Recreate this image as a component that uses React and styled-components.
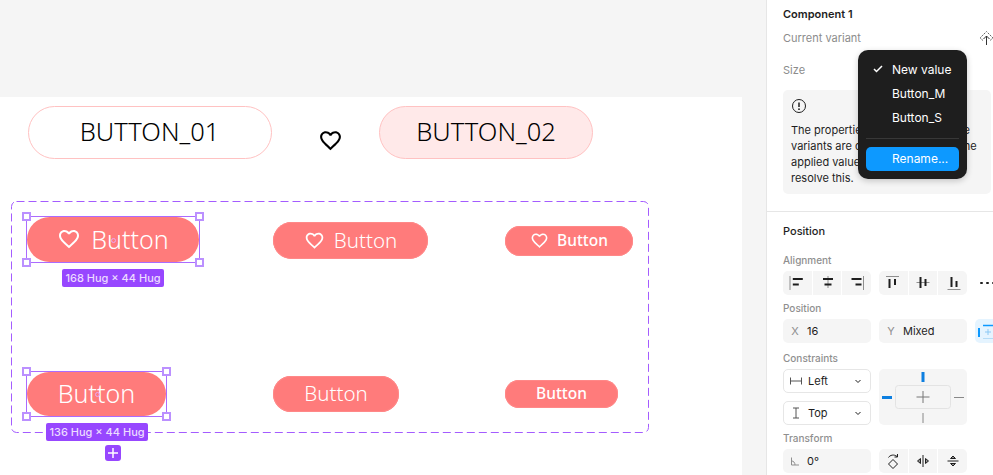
import styled, { createGlobalStyle } from 'styled-components';

const GlobalStyle = createGlobalStyle`
  html, body {
    margin: 0;
    padding: 0;
    background: #f5f5f5;
  }
  #root {
    height: 475px;
    overflow: hidden;
  }
`;

const Page = styled.div`
  display: flex;
  width: 993px;
  height: 475px;
  overflow: hidden;
  font-family: Inter, "Liberation Sans", sans-serif;
`;

/* canvas side: things here sit at their own place on the figma canvas */
const Canvas = styled.div`
  position: relative;
  width: 766px;
  height: 475px;
  flex: none;
  background: #f5f5f5;
`;

const Frame = styled.div`
  position: absolute;
  left: 0;
  top: 97px;
  width: 742px;
  height: 378px;
  background: #fff;
`;

const Pill = styled.div`
  position: absolute;
  left: ${p => p.$x}px;
  top: 106px;
  width: ${p => p.$w}px;
  height: 53px;
  box-sizing: border-box;
  display: flex;
  align-items: center;
  justify-content: center;
  padding-bottom: 4px;
  border: 1px solid #ffc2c2;
  border-radius: 27px;
  background: ${p => (p.$tint ? '#ffe9e9' : '#fff')};
  color: #000;
  font-family: "Noto Sans", sans-serif;
  font-weight: 300;
  font-size: 25.5px;
`;

const Btn = styled.div`
  position: absolute;
  left: ${p => p.$x}px;
  top: ${p => p.$y}px;
  width: ${p => p.$w}px;
  height: ${p => p.$h}px;
  box-sizing: border-box;
  display: flex;
  align-items: center;
  justify-content: center;
  gap: ${p => p.$gap}px;
  padding-bottom: 1px;
  border-radius: ${p => p.$h / 2}px;
  background: #ff7b7b;
  box-shadow: ${p => (p.$edge ? 'inset 0 0 0 1px #ff8888' : 'none')};
  color: #fff;
  font-family: "Noto Sans", sans-serif;
  font-weight: ${p => p.$weight};
  font-size: ${p => p.$font}px;
  line-height: 1;
`;

const HeartIcon = ({ size, color = '#fff' }) => (
  <svg width={size} height={size} viewBox="0 0 24 24" fill={color} style={{ flex: 'none' }}>
    <path d="M16.5 3c-1.74 0-3.41.81-4.5 2.09C10.91 3.81 9.24 3 7.5 3 4.42 3 2 5.42 2 8.5c0 3.78 3.4 6.86 8.55 11.54L12 21.35l1.45-1.32C18.6 15.36 22 12.28 22 8.5 22 5.42 19.58 3 16.5 3zm-4.4 15.55l-.1.1-.1-.1C7.14 14.24 4 11.39 4 8.5 4 6.5 5.5 5 7.5 5c1.54 0 3.04.99 3.57 2.36h1.87C13.46 5.99 14.96 5 16.5 5c2 0 3.5 1.5 3.5 3.5 0 2.89-3.14 5.74-7.9 10.05z" />
  </svg>
);

const LooseHeart = styled.div`
  position: absolute;
  left: 318px;
  top: 128px;
  width: 25px;
  height: 25px;
`;

const DashFrame = styled.svg`
  position: absolute;
  left: 11px;
  top: 201px;
  overflow: visible;
`;

const Selection = styled.div`
  position: absolute;
  left: ${p => p.$x}px;
  top: ${p => p.$y}px;
  width: ${p => p.$w}px;
  height: ${p => p.$h}px;
  box-sizing: border-box;
  border: 1.5px solid #ab6bff;
`;

const Handle = styled.span`
  position: absolute;
  box-sizing: border-box;
  width: 9px;
  height: 9px;
  background: #fff;
  border: 2px solid #bb90ff;
  ${p => (p.$top ? 'top: -5px;' : 'bottom: -5px;')}
  ${p => (p.$left ? 'left: -5px;' : 'right: -5px;')}
`;

const CenterDot = styled.span`
  position: absolute;
  left: 50%;
  top: 50%;
  width: 3px;
  height: 3px;
  margin: -2px 0 0 -2px;
  border: 1px solid #e9a6f5;
  border-radius: 50%;
`;

const SizeTag = styled.div`
  position: absolute;
  left: ${p => p.$x}px;
  top: ${p => p.$y}px;
  width: 102px;
  height: 18px;
  display: flex;
  align-items: center;
  justify-content: center;
  border-radius: 2px;
  background: #9747ff;
  color: #ecdcff;
  font-size: 11px;
  font-weight: 500;
  white-space: nowrap;
`;

const AddBadge = styled.div`
  position: absolute;
  left: 105px;
  top: 445px;
  width: 16px;
  height: 16px;
  display: flex;
  align-items: center;
  justify-content: center;
  border-radius: 3px;
  background: #9747ff;
`;

/* right panel */
const Panel = styled.aside`
  position: relative;
  width: 227px;
  height: 475px;
  flex: none;
  box-sizing: border-box;
  background: #fff;
  border-left: 1px solid #e6e6e6;
  color: #1e1e1e;
  font-size: 11px;
`;

const Section = styled.section`
  padding: ${p => p.$pad};
  padding-left: 16px;
  border-bottom: ${p => (p.$line ? '1px solid #e6e6e6' : 'none')};
`;

const Title = styled.div`
  height: 16px;
  line-height: 16px;
  font-weight: ${p => p.$weight || 500};
  white-space: nowrap;
`;

const VariantRow = styled.div`
  display: flex;
  align-items: center;
  justify-content: space-between;
  height: 24px;
  margin-top: ${p => p.$mt}px;
  color: #8c8c8c;
`;

const Notice = styled.div`
  width: 208px;
  height: 104px;
  box-sizing: border-box;
  margin-top: 8px;
  padding: 8px;
  border-radius: 5px;
  background: #f5f5f5;
  line-height: 16px;
  white-space: nowrap;
  overflow: hidden;
`;

const NoticeIcon = styled.div`
  height: 16px;
  margin-bottom: 8px;
`;

const Label = styled.div`
  height: 16px;
  line-height: 16px;
  margin-top: ${p => p.$mt}px;
  margin-bottom: 3px;
  color: #8f8f8f;
  font-size: 10px;
  font-weight: 500;
`;

const Line = styled.div`
  display: grid;
  grid-template-columns: 88px 88px 18px;
  gap: 8px;
`;

const Seg = styled.div`
  display: grid;
  grid-template-columns: repeat(3, 1fr);
  gap: 1px;
  height: 24px;
  border-radius: 5px;
  overflow: hidden;
`;

const SegCell = styled.div`
  display: flex;
  align-items: center;
  justify-content: center;
  background: #f5f5f5;
`;

const Dots = styled.div`
  display: flex;
  align-items: center;
  gap: 3.5px;
  padding-left: 5px;
`;

const Dot = styled.span`
  flex: none;
  width: 2.5px;
  height: 2.5px;
  border-radius: 50%;
  background: #1e1e1e;
`;

const Field = styled.div`
  display: flex;
  align-items: center;
  height: 24px;
  padding-left: 4px;
  border-radius: 5px;
  background: #f5f5f5;
`;

const FieldKey = styled.span`
  display: flex;
  justify-content: center;
  width: 16px;
  color: #8f8f8f;
  flex: none;
`;

const FieldValue = styled.span`
  margin-left: 4px;
`;

const BlueToggle = styled.div`
  display: flex;
  align-items: center;
  height: 24px;
  padding-left: 2px;
  border-radius: 5px 0 0 5px;
  background: #e5f4ff;
`;

const Stack = styled.div`
  display: flex;
  flex-direction: column;
  gap: 8px;
`;

const Select = styled.div`
  display: flex;
  align-items: center;
  height: 24px;
  box-sizing: border-box;
  padding: 0 8px 0 6px;
  border: 1px solid #e6e6e6;
  border-radius: 5px;
`;

const SelectText = styled.span`
  flex: 1;
  margin-left: 6px;
`;

const ConstraintBox = styled.div`
  height: 56px;
  border-radius: 5px;
  background: #f5f5f5;
`;

const Menu = styled.div`
  position: absolute;
  left: 91px;
  top: 50px;
  width: 109px;
  height: 129px;
  box-sizing: border-box;
  padding: 8px;
  border-radius: 10px;
  background: #1e1e1e;
  color: #fff;
  font-size: 12px;
  box-shadow: 0 2px 6px rgba(0, 0, 0, 0.2);
`;

const MenuItem = styled.div`
  display: flex;
  align-items: center;
  height: 24px;
  box-sizing: border-box;
  padding: 0 0 2px 26px;
  position: relative;
  border-radius: 5px;
  background: ${p => (p.$active ? '#0d99ff' : 'transparent')};
`;

const MenuCheck = styled.svg`
  position: absolute;
  left: 7px;
  top: 7px;
`;

const MenuLine = styled.div`
  height: 1px;
  margin: 8px 0;
  background: #383838;
`;

const Icon = ({ children, size = 16, w, h }) => (
  <svg width={w || size} height={h || size} viewBox={`0 0 ${w || size} ${h || size}`} fill="none" style={{ flex: 'none', display: 'block' }}>
    {children}
  </svg>
);

const ink = '#1e1e1e';
const soft = '#8f8f8f';

const alignIcons = [
  <><path d="M1 1v14" stroke={soft} /><path d="M3.8 4h10M3.8 9.5h6" stroke={ink} strokeWidth="2" /></>,
  <><path d="M9 1v12" stroke={soft} /><path d="M4 4h10M5.500 9.500h7" stroke={ink} strokeWidth="2" /></>,
  <><path d="M14.500 1v14" stroke={soft} /><path d="M2.500 4h10M6.500 9.500h6" stroke={ink} strokeWidth="2" /></>,
  <><path d="M1 1.500h13" stroke={soft} /><path d="M4.500 4v9M10 4v6" stroke={ink} strokeWidth="2" /></>,
  <><path d="M1.500 7.500h13" stroke={soft} /><path d="M5.500 2v11M10.500 4v7" stroke={ink} strokeWidth="2" /></>,
  <><path d="M2.500 14.500h13" stroke={soft} /><path d="M6.500 2v10M11.500 6v6" stroke={ink} strokeWidth="2" /></>,
];

const transformIcons = [
  <><path d="M3.500 4.500C5 2 9 1 12 3.500M12.500 1v3h-3" stroke={ink} /><path d="M8 6.500l4.500 4.500L8 15.500 3.500 11z" stroke={ink} /></>,
  <><path d="M8 2v12" stroke={ink} /><path d="M5.500 5.500v5L2.500 8zM10.500 5.500v5l3-2.500z" stroke={ink} fill="#8f8f8f" /></>,
  <><path d="M2.500 8h11" stroke={ink} /><path d="M5.500 5.500h5L8 3zM5.500 10.500h5L8 13z" stroke={ink} fill="#8f8f8f" /></>,
];

const Handles = () => (
  <>
    <Handle $top $left />
    <Handle $top />
    <Handle $left />
    <Handle />
  </>
);

export default function App() {
  return (
    <Page>
      <GlobalStyle />
      <Canvas>
        <Frame />
        <Pill $x={27.5} $w={244}>BUTTON_01</Pill>
        <LooseHeart><HeartIcon size={25} color="#000" /></LooseHeart>
        <Pill $x={379} $w={214} $tint>BUTTON_02</Pill>

        <DashFrame width="638" height="232">
          <rect x="0.5" y="0.5" width="637" height="231" rx="5" fill="none" stroke="#a45cff" strokeDasharray="8 4" />
        </DashFrame>

        <Btn $x={27} $y={217} $w={172} $h={45} $gap={10} $font={25} $weight={300}>
          <HeartIcon size={24} />Button
        </Btn>
        <Btn $edge $x={273} $y={222} $w={155} $h={37} $gap={9} $font={20.500} $weight={300}>
          <HeartIcon size={21} />Button
        </Btn>
        <Btn $edge $x={505} $y={226} $w={128} $h={30} $gap={8} $font={15.500} $weight={500}>
          <HeartIcon size={19} />Button
        </Btn>
        <Btn $x={27} $y={372} $w={139} $h={44} $gap={0} $font={25} $weight={300}>Button</Btn>
        <Btn $edge $x={273} $y={376} $w={126} $h={36} $gap={0} $font={20.500} $weight={300}>Button</Btn>
        <Btn $edge $x={505} $y={380} $w={113} $h={28} $gap={0} $font={15.500} $weight={500}>Button</Btn>

        <Selection $x={26} $y={216} $w={174} $h={47}><Handles /><CenterDot /></Selection>
        <Selection $x={26} $y={371} $w={141} $h={46}><Handles /><CenterDot /></Selection>

        <SizeTag $x={62} $y={269}>168 Hug × 44 Hug</SizeTag>
        <SizeTag $x={46} $y={423}>136 Hug × 44 Hug</SizeTag>
        <AddBadge>
          <svg width="12" height="12" viewBox="0 0 12 12" fill="none">
            <path d="M6 1v10M1 6h10" stroke="#fff" strokeWidth="1.500" />
          </svg>
        </AddBadge>
      </Canvas>

      <Panel>
        <Section $pad="6px 0 17px" $line>
          <Title $weight={600}>Component 1</Title>
          <VariantRow $mt={4}>
            Current variant
            <Icon size={16}>
              <path d="M6 10.500L3 8 9.500 1.500 16 8 13 10.500" stroke="#666" strokeDasharray="2 1" />
              <path d="M9.500 15V6M6.500 9l3-3 3 3" stroke="#333" />
            </Icon>
          </VariantRow>
          <VariantRow $mt={8}>Size</VariantRow>
          <Notice>
            <NoticeIcon>
              <Icon size={16}>
                <circle cx="8" cy="8" r="6.500" stroke={ink} />
                <path d="M8 4.500v4.500" stroke={ink} strokeWidth="1.500" />
                <circle cx="8" cy="11.200" r="0.900" fill={ink} />
              </Icon>
            </NoticeIcon>
            The properties set on any of these<br />
            variants are conflicting with the one<br />
            applied values. Update them to<br />
            resolve this.
          </Notice>
        </Section>

        <Section $pad="11px 0 0">
          <Title>Position</Title>
          <Label $mt={13}>Alignment</Label>
          <Line>
            <Seg>{alignIcons.slice(0, 3).map((g, i) => <SegCell key={i}><Icon>{g}</Icon></SegCell>)}</Seg>
            <Seg>{alignIcons.slice(3).map((g, i) => <SegCell key={i}><Icon>{g}</Icon></SegCell>)}</Seg>
            <Dots><Dot /><Dot /><Dot /></Dots>
          </Line>
          <Label $mt={5}>Position</Label>
          <Line>
            <Field><FieldKey>X</FieldKey><FieldValue>16</FieldValue></Field>
            <Field><FieldKey>Y</FieldKey><FieldValue>Mixed</FieldValue></Field>
            <BlueToggle>
              <Icon>
                <path d="M2 5v9" stroke="#0d99ff" strokeWidth="2" />
                <path d="M6 2.500h10" stroke="#0d99ff" strokeWidth="1.500" />
                <path d="M6 15.500h10" stroke="#b5dcf7" />
                <path d="M11 6v6M8 9h6" stroke="#8cc9f5" />
              </Icon>
            </BlueToggle>
          </Line>
          <Label $mt={7}>Constraints</Label>
          <Line>
            <Stack>
              <Select>
                <Icon size={12}>
                  <path d="M0.500 2.500v7M11.500 2.500v7M0.500 6h11" stroke="#555" />
                </Icon>
                <SelectText>Left</SelectText>
                <Icon w={8} h={8}><path d="M1.500 3L4 5.500 6.500 3" stroke={ink} /></Icon>
              </Select>
              <Select>
                <Icon size={12}>
                  <path d="M3 1h6M3 11h6M6 1v10" stroke="#555" />
                </Icon>
                <SelectText>Top</SelectText>
                <Icon w={8} h={8}><path d="M1.500 3L4 5.500 6.500 3" stroke={ink} /></Icon>
              </Select>
            </Stack>
            <ConstraintBox>
              <Icon w={88} h={56}>
                <rect x="16.500" y="16.500" width="55" height="23" rx="3" stroke="#e3e3e3" />
                <path d="M44 22v12M37.500 28h13" stroke="#777" />
                <path d="M44 3v10M3 28.500h10" stroke="#0d7fe0" strokeWidth="3" />
                <path d="M44 44v10M75 28.500h10" stroke="#888" />
              </Icon>
            </ConstraintBox>
          </Line>
          <Label $mt={5}>Transform</Label>
          <Line>
            <Field>
              <FieldKey>
                <Icon size={12}><path d="M2.500 2.500v7.500h7.500M2.500 6c2 0 3.500 1.500 3.500 4" stroke={soft} /></Icon>
              </FieldKey>
              <FieldValue>0°</FieldValue>
            </Field>
            <Seg>{transformIcons.map((g, i) => <SegCell key={i}><Icon>{g}</Icon></SegCell>)}</Seg>
          </Line>
        </Section>

        <Menu>
          <MenuItem>
            <MenuCheck width="10" height="8" viewBox="0 0 10 8" fill="none">
              <path d="M1 4l2.500 2.500L9 1" stroke="#fff" strokeWidth="1.500" />
            </MenuCheck>
            New value
          </MenuItem>
          <MenuItem>Button_M</MenuItem>
          <MenuItem>Button_S</MenuItem>
          <MenuLine />
          <MenuItem $active>Rename...</MenuItem>
        </Menu>
      </Panel>
    </Page>
  );
}
